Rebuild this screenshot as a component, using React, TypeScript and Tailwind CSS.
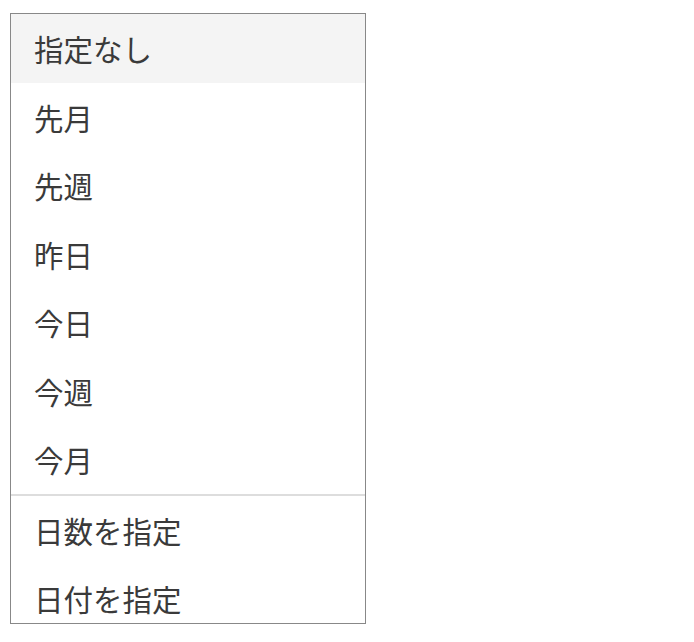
import React from "react";

const mainItems = ["指定なし", "先月", "先週", "昨日", "今日", "今週", "今月"];
const customItems = ["日数を指定", "日付を指定"];

export default function App() {
  return (
    <div className="min-h-screen bg-white pl-[10px] pt-[13px]">
      <div
        className="w-[356px] h-[611px] overflow-hidden border border-[#888888] bg-white text-[#3a3a3a]"
        style={{ fontFamily: '"Noto Sans CJK JP", "Noto Sans", sans-serif' }}
      >
        <ul>
          {mainItems.map((label, i) => (
            <li
              key={label}
              className={`flex h-[68.5px] items-center pl-[23px] text-[29.5px] ${i === 0 ? "bg-[#f4f4f4]" : ""}`}
            >
              {label}
            </li>
          ))}
        </ul>
        <div className="h-[2px] bg-[#dddddd]" />
        <ul>
          {customItems.map((label) => (
            <li key={label} className="flex h-[68.5px] items-center pl-[23px] text-[29.5px]">
              {label}
            </li>
          ))}
        </ul>
      </div>
    </div>
  );
}
